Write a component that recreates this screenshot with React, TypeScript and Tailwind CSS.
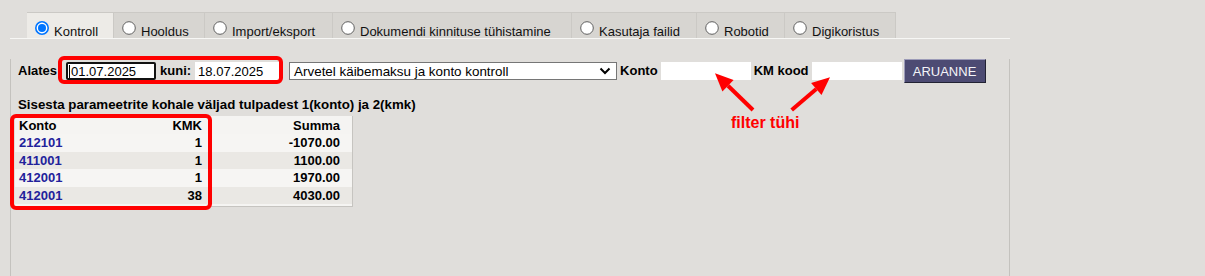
import React from 'react';

const tabs = [
  { label: 'Kontroll', width: 'w-[87px]', active: true },
  { label: 'Hooldus', width: 'w-[91px]', active: false },
  { label: 'Import/eksport', width: 'w-[128px]', active: false },
  { label: 'Dokumendi kinnituse tühistamine', width: 'w-[239px]', active: false },
  { label: 'Kasutaja failid', width: 'w-[125px]', active: false },
  { label: 'Robotid', width: 'w-[88px]', active: false },
  { label: 'Digikoristus', width: 'w-[111px]', active: false },
];

const rows = [
  { konto: '212101', kmk: '1', summa: '-1070.00' },
  { konto: '411001', kmk: '1', summa: '1100.00' },
  { konto: '412001', kmk: '1', summa: '1970.00' },
  { konto: '412001', kmk: '38', summa: '4030.00' },
];

const Radio: React.FC<{ checked: boolean }> = ({ checked }) => (
  <svg width="14" height="14" viewBox="0 0 14 14" className="mt-[8px] shrink-0">
    {checked ? (
      <>
        <circle cx="7" cy="7" r="6.2" fill="#ffffff" stroke="#0075ff" strokeWidth="1.6" />
        <circle cx="7" cy="7" r="4" fill="#0075ff" />
      </>
    ) : (
      <circle cx="7" cy="7" r="6.3" fill="#ffffff" stroke="#5f5f5f" strokeWidth="1" />
    )}
  </svg>
);

const Tab: React.FC<{ label: string; width: string; active: boolean }> = ({ label, width, active }) => (
  <div
    className={`flex h-[26px] gap-[5px] pl-[8px] border-t border-r border-[#cbc9c5] ${width} ${
      active ? 'bg-[#edebe7]' : 'bg-[#d7d5d1]'
    }`}
  >
    <Radio checked={active} />
    <span className="mt-[11px] leading-[15px] whitespace-nowrap text-[#111]">{label}</span>
  </div>
);

export default function App() {
  return (
    <div
      className="relative w-[1205px] h-[276px] overflow-hidden bg-[#e0dedb] pt-[12px] text-[13px] text-black"
      style={{ fontFamily: '"Liberation Sans", Arial, sans-serif' }}
    >
      <div className="ml-[10px] w-[1000px]">
        {/* tabs */}
        <div className="flex pl-[17px] border-b border-[#f7f7f5]">
          {tabs.map((t) => (
            <Tab key={t.label} {...t} />
          ))}
        </div>

        {/* panel */}
        <div className="h-[240px] border-l border-r border-[#c4c2be]">
          <div className="flex items-center h-[24px] mt-[20px]">
            <span className="ml-[7px] font-bold">Alates</span>
            <div className="ml-[9px] w-[90px] h-[18px] border-2 border-[#111] rounded-[2px] bg-white flex items-center pl-[1px]">
              <span className="w-px h-[13px] bg-black mr-px" />
              <span className="leading-[15px]">01.07.2025</span>
            </div>
            <span className="ml-[4px] font-bold">kuni:</span>
            <div className="ml-[4px] w-[84px] h-[18px] bg-white flex items-center pl-[3px] leading-[15px]">
              18.07.2025
            </div>
            <div className="relative ml-[10px] w-[328px] h-[18px] border border-[#767676] bg-white flex items-center pl-[4px] leading-[15px] text-[13.4px]">
              Arvetel käibemaksu ja konto kontroll
              <svg
                width="12"
                height="8"
                viewBox="0 0 12 8"
                className="absolute right-[5px] top-[4px]"
              >
                <path d="M1.5 1.5 L6 6 L10.5 1.5" fill="none" stroke="#000" strokeWidth="2" />
              </svg>
            </div>
            <span className="ml-[3px] font-bold">Konto</span>
            <div className="ml-[3px] w-[90px] h-[18px] bg-white" />
            <span className="ml-[3px] font-bold">KM kood</span>
            <div className="ml-[3px] w-[90px] h-[18px] bg-white" />
            <button className="ml-[2px] w-[82px] h-[24px] bg-[#4d4b73] text-[#f4f4f8] border border-t-[#9c9bb8] border-l-[#9c9bb8] border-r-[#222233] border-b-[#222233] leading-[15px]">
              ARUANNE
            </button>
          </div>

          <div className="mt-[14px] ml-[7px] font-bold leading-[15px] text-[13.3px]">
            Sisesta parameetrite kohale väljad tulpadest 1(konto) ja 2(kmk)
          </div>

          <div className="mt-[4px] ml-[4px] w-[338px] bg-[#f5f4f2] border-r border-b border-[#c6c4c0] pb-[2px] font-bold">
            <div className="grid grid-cols-[95px_96px_138px] h-[18px] items-center leading-[15px]">
              <span className="pl-[4px]">Konto</span>
              <span className="text-right pr-[4px]">KMK</span>
              <span className="text-right pr-[4px]">Summa</span>
            </div>
            {rows.map((r, i) => (
              <div
                key={i}
                className={`grid grid-cols-[95px_96px_138px] h-[17.5px] items-center leading-[15px] ${
                  i % 2 === 1 ? 'bg-[#eae8e4]' : 'bg-[#f6f5f3]'
                }`}
              >
                <span className="pl-[4px] text-[#22229b]">{r.konto}</span>
                <span className="text-right pr-[4px]">{r.kmk}</span>
                <span className="text-right pr-[4px]">{r.summa}</span>
              </div>
            ))}
          </div>
        </div>
      </div>

      {/* annotations */}
      <div className="absolute left-[58px] top-[56px] w-[225px] h-[28px] border-4 border-[#ff0000] rounded-[6px] pointer-events-none" />
      <div className="absolute left-[10px] top-[114px] w-[202px] h-[96px] border-4 border-[#ff0000] rounded-[6px] pointer-events-none" />
      <svg
        className="absolute left-0 top-0 pointer-events-none"
        width="1205"
        height="276"
        viewBox="0 0 1205 276"
      >
        <line x1="753" y1="110" x2="728" y2="85.8" stroke="#ff0000" strokeWidth="4" />
        <polygon points="715,73.3 722.4,91.6 733.6,80" fill="#ff0000" />
        <line x1="791.7" y1="110" x2="816.3" y2="89" stroke="#ff0000" strokeWidth="4" />
        <polygon points="830,77.3 821.5,95.1 811.1,82.9" fill="#ff0000" />
      </svg>
      <div className="absolute left-[731px] top-[115px] text-[16px] leading-[16px] font-bold text-[#ff0000] whitespace-nowrap">
        filter tühi
      </div>
    </div>
  );
}
